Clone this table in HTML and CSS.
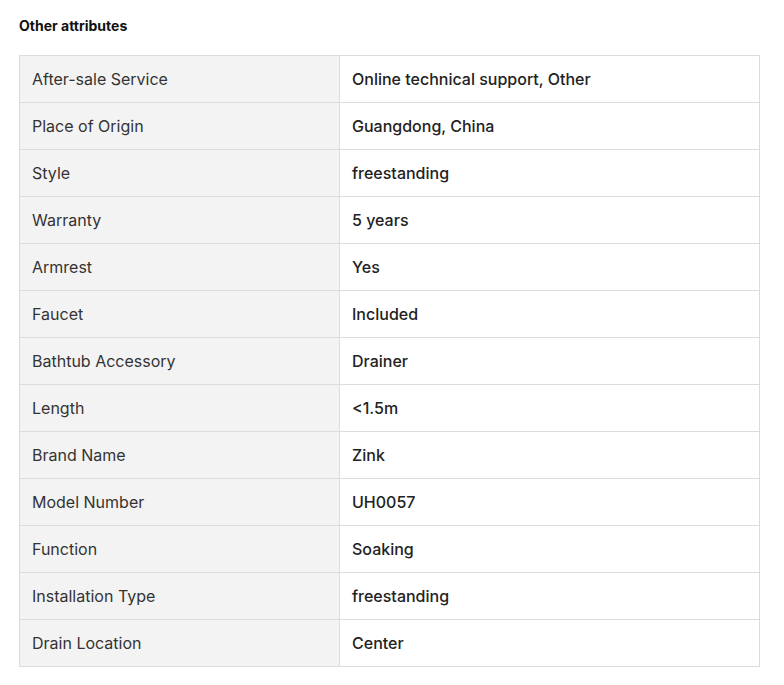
FILE: index.html
```html
<!DOCTYPE html>
<html>
<head>
<meta charset="utf-8">
<link rel="stylesheet" href="styles.css">
</head>
<body>
<div class="page">
  <h2 class="title">Other attributes</h2>
  <table class="attrs">
    <tr><td class="k">After-sale Service</td><td class="v">Online technical support, Other</td></tr>
    <tr><td class="k">Place of Origin</td><td class="v">Guangdong, China</td></tr>
    <tr><td class="k">Style</td><td class="v">freestanding</td></tr>
    <tr><td class="k">Warranty</td><td class="v">5 years</td></tr>
    <tr><td class="k">Armrest</td><td class="v">Yes</td></tr>
    <tr><td class="k">Faucet</td><td class="v">Included</td></tr>
    <tr><td class="k">Bathtub Accessory</td><td class="v">Drainer</td></tr>
    <tr><td class="k">Length</td><td class="v">&lt;1.5m</td></tr>
    <tr><td class="k">Brand Name</td><td class="v">Zink</td></tr>
    <tr><td class="k">Model Number</td><td class="v">UH0057</td></tr>
    <tr><td class="k">Function</td><td class="v">Soaking</td></tr>
    <tr><td class="k">Installation Type</td><td class="v">freestanding</td></tr>
    <tr><td class="k">Drain Location</td><td class="v">Center</td></tr>
  </table>
</div>
</body>
</html>
```
FILE: styles.css
```css
html, body { margin: 0; padding: 0; background: #fff; }
body { font-family: Inter, "Noto Sans", sans-serif; color: #222; }
.page { padding: 17px 24px 0 19px; }
.title { margin: 0 0 21px 0; font-size: 14px; font-weight: 700; line-height: 17px; color: #111; }
.attrs { width: 741px; border-collapse: collapse; table-layout: fixed; }
.attrs td { border: 1px solid #dcdcdc; padding: 0 12px; font-size: 16px; line-height: 20px; box-sizing: border-box; height: 47px; }
.attrs .k { width: 320px; background: #f3f3f3; color: #333; }
.attrs .v { background: #fff; color: #222; font-weight: 500; }
```
